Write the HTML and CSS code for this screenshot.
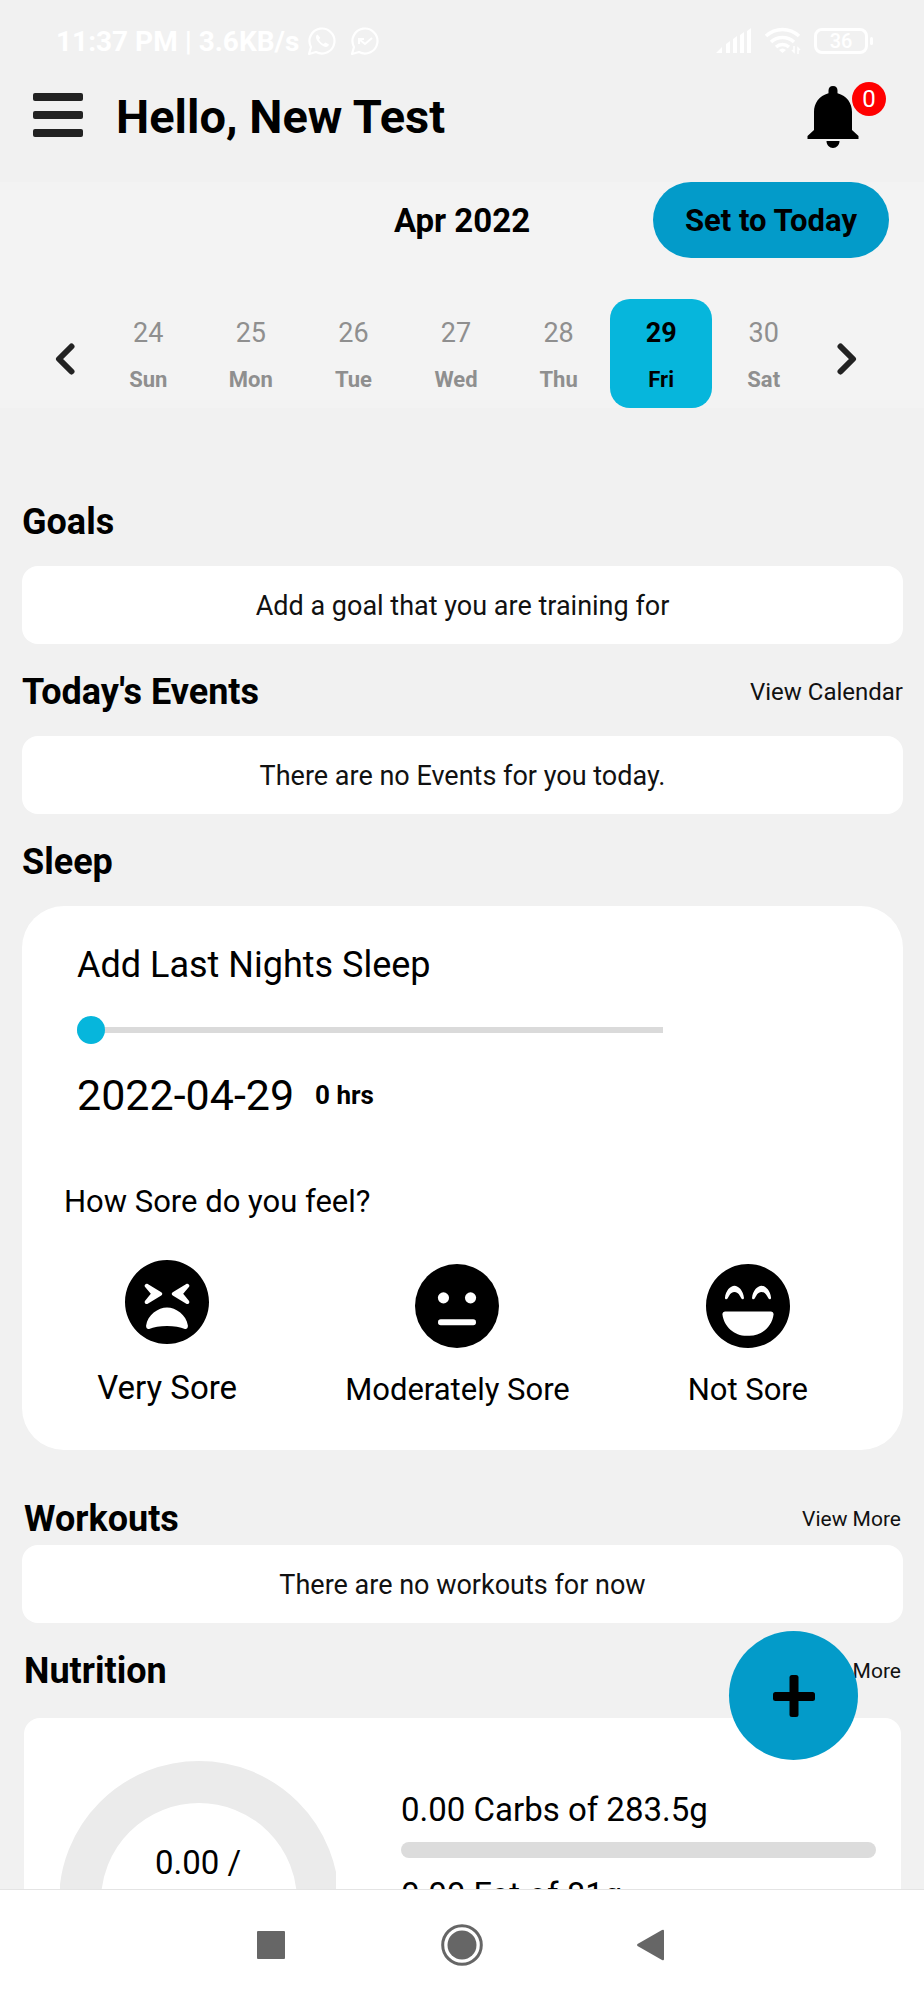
FILE: index.html
```html
<!DOCTYPE html>
<html lang="en">
<head>
<meta charset="utf-8">
<meta name="viewport" content="width=device-width, initial-scale=1">
<title>Training Dashboard</title>
<link rel="stylesheet" href="styles.css">
</head>
<body>
<div class="screen">
  <div class="status-bar">
    <div class="status-left">
      <span>11:37 PM | 3.6KB/s</span>
      <svg class="chat-icon" viewBox="0 0 30 30" aria-hidden="true">
        <path d="M2 28l2-7a12.500 12.500 0 1 1 5 5z" fill="none" stroke="currentColor" stroke-width="2.200" stroke-linejoin="round"/>
        <path d="M10.500 8.500c-2 1-2 4 0 6.500s4 4.500 6.500 5.500 4.500 0 5-2l-3.500-2-2 1.500c-2-1-3.500-2.500-4.500-4.500l1.300-1.700z" fill="currentColor"/>
      </svg>
      <svg class="chat-icon chat-icon-second" viewBox="0 0 30 30" aria-hidden="true">
        <path d="M2 28l2-7a12.500 12.500 0 1 1 5 5z" fill="none" stroke="currentColor" stroke-width="2.200" stroke-linejoin="round"/>
        <path d="M9 18v-5h5M9.500 13.500l5.500 4.500 7-6" fill="none" stroke="currentColor" stroke-width="2"/>
      </svg>
    </div>
    <div class="status-right">
      <svg class="signal-icon" viewBox="0 0 36 26" aria-hidden="true" fill="currentColor">
        <path d="M0 25l6-6v6zM10 16l4-3v12h-4zM17 11l4-3v17h-4zM24 7l4-3v21h-4zM31 3l4-3v25h-4z"/>
      </svg>
      <svg class="wifi-icon" viewBox="0 0 38 30" aria-hidden="true" fill="none" stroke="currentColor" stroke-width="3.500">
        <path d="M2 10a24 24 0 0 1 33 0M7 16a17 17 0 0 1 23 0M12 21a10 10 0 0 1 13 0"/>
        <path d="M15 24q3.500-3 7 0l-3.500 3z" fill="currentColor" stroke="none"/>
        <path d="M30 20v6l-2-2M34 28v-6l2 2" stroke-width="1.500"/>
      </svg>
      <span class="battery">36</span>
    </div>
  </div>

  <header class="header">
    <button class="icon-button" type="button" aria-label="Menu">
      <svg class="menu-icon" viewBox="0 0 50 44" fill="#222"><rect width="50" height="8" rx="2"/><rect y="18" width="50" height="8" rx="2"/><rect y="36" width="50" height="8" rx="2"/></svg>
    </button>
    <h1 class="greeting">Hello, New Test</h1>
    <button class="icon-button bell" type="button" aria-label="Notifications">
      <svg class="bell-icon" viewBox="0 0 52 62"><path d="M26 0c3 0 4.500 2 4.500 4.500v2.700C40 10 45 17 45 26v18l6.500 6v3H.500v-3L7 44V26C7 17 12 10 21.500 7.200V4.500C21.500 2 23 0 26 0zM19.500 55h13c0 4-3 7-6.500 7s-6.500-3-6.500-7z"/></svg>
      <span class="badge">0</span>
    </button>
  </header>

  <section class="calendar" aria-label="Calendar">
    <div class="month-row">
      <h2 class="month">Apr 2022</h2>
      <button class="today-button" type="button">Set to Today</button>
    </div>
    <div class="week">
      <button class="icon-button arrow" type="button" aria-label="Previous week"><svg class="arrow-icon" viewBox="0 0 20 32"><path d="M16.500 3.500L4 16l12.500 12.500"/></svg></button>
      <div class="days">
        <button class="day" type="button"><span class="day-number">24</span><span class="day-name">Sun</span></button>
        <button class="day" type="button"><span class="day-number">25</span><span class="day-name">Mon</span></button>
        <button class="day" type="button"><span class="day-number">26</span><span class="day-name">Tue</span></button>
        <button class="day" type="button"><span class="day-number">27</span><span class="day-name">Wed</span></button>
        <button class="day" type="button"><span class="day-number">28</span><span class="day-name">Thu</span></button>
        <button class="day day-selected" type="button" aria-pressed="true"><span class="day-number">29</span><span class="day-name">Fri</span></button>
        <button class="day" type="button"><span class="day-number">30</span><span class="day-name">Sat</span></button>
      </div>
      <button class="icon-button arrow" type="button" aria-label="Next week"><svg class="arrow-icon" viewBox="0 0 20 32"><path d="M3.500 3.500L16 16 3.500 28.500"/></svg></button>
    </div>
  </section>

  <main class="content">
    <section>
      <div class="section-head"><h2 class="section-title">Goals</h2></div>
      <button class="card message" type="button">Add a goal that you are training for</button>
    </section>

    <section>
      <div class="section-head"><h2 class="section-title">Today's Events</h2><a class="link" href="#calendar">View Calendar</a></div>
      <p class="card message">There are no Events for you today.</p>
    </section>

    <section>
      <div class="section-head"><h2 class="section-title">Sleep</h2></div>
      <div class="card sleep">
        <div class="sleep-log">
          <label class="sleep-title" for="sleep-hours">Add Last Nights Sleep</label>
          <input class="slider" id="sleep-hours" type="range" min="0" max="12" value="0">
          <div class="sleep-value"><span class="sleep-date">2022-04-29</span><output class="sleep-hours" for="sleep-hours">0 hrs</output></div>
        </div>
        <h3 class="question">How Sore do you feel?</h3>
        <div class="moods">
          <button class="mood mood-large" type="button">
            <svg class="face" viewBox="0 8 496 496" aria-hidden="true"><path d="M248 8C111 8 0 119 0 256s111 248 248 248 248-111 248-248S385 8 248 8zm33.800 189.700l80-48c11.600-6.900 24 7.700 15.400 18L343.600 208l33.600 40.300c8.700 10.400-3.900 24.800-15.400 18l-80-48c-7.700-4.700-7.700-15.900 0-20.600zm-163-30c-8.600-10.300 3.800-24.900 15.400-18l80 48c7.800 4.700 7.800 15.900 0 20.600l-80 48c-11.500 6.800-24-7.600-15.400-18l33.600-40.300-33.600-40.300zM248 288c51.900 0 115.300 43.800 123.200 106.700 1.700 13.600-8 24.600-17.700 20.400-25.900-11.100-64.400-17.400-105.500-17.400s-79.600 6.300-105.500 17.400c-9.800 4.200-19.400-7-17.700-20.400C132.700 331.800 196.100 288 248 288z"/></svg>
            <span>Very Sore</span>
          </button>
          <button class="mood" type="button">
            <svg class="face" viewBox="0 8 496 496" aria-hidden="true"><circle cx="248" cy="256" r="248"/><g fill="#fff"><circle cx="168" cy="208" r="33"/><circle cx="328" cy="208" r="33"/><rect x="136" y="334" width="224" height="36" rx="16"/></g></svg>
            <span>Moderately Sore</span>
          </button>
          <button class="mood" type="button">
            <svg class="face" viewBox="0 8 496 496" aria-hidden="true"><path d="M248 8C111 8 0 119 0 256s111 248 248 248 248-111 248-248S385 8 248 8zm24 199.400c3.300-42.100 32.200-71.400 56-71.400s52.700 29.300 56 71.400c.7 8.600-10.800 11.900-14.900 4.500l-9.500-17c-7.700-13.700-19.200-21.600-31.500-21.600s-23.800 7.900-31.500 21.600l-9.500 17c-4.200 7.400-15.800 4.100-15.100-4.500zm-160 0c3.300-42.100 32.200-71.400 56-71.400s52.700 29.300 56 71.400c.7 8.600-10.800 11.900-14.900 4.500l-9.500-17c-7.700-13.700-19.200-21.600-31.500-21.600s-23.800 7.900-31.500 21.600l-9.500 17c-4.300 7.400-15.800 4-15.100-4.500zM398.900 306C390 377 329.400 432 256 432h-16c-73.400 0-134-55-142.900-126-1.200-9.500 6.300-18 15.900-18h270c9.600 0 17.100 8.400 15.900 18z"/></svg>
            <span>Not Sore</span>
          </button>
        </div>
      </div>
    </section>

    <section>
      <div class="section-head section-head-inset section-head-low"><h2 class="section-title">Workouts</h2><a class="link link-small" href="#workouts">View More</a></div>
      <p class="card message">There are no workouts for now</p>
    </section>

    <section>
      <div class="section-head section-head-inset"><h2 class="section-title">Nutrition</h2><a class="link link-small" href="#nutrition">View More</a></div>
      <div class="card nutrition">
        <div class="calories">
          <svg class="ring" viewBox="0 0 276 280" aria-hidden="true"><circle cx="139" cy="140" r="119" fill="none" stroke="#ebebeb" stroke-width="42"/></svg>
          <span class="calories-value">0.00 /</span>
        </div>
        <div class="macros">
          <div class="macro"><span>0.00 Carbs of 283.5g</span><div class="bar"></div></div>
          <div class="macro"><span>0.00 Fat of 81g</span><div class="bar"></div></div>
        </div>
      </div>
    </section>
  </main>

  <nav class="system-nav" aria-label="System">
    <button class="icon-button" type="button" aria-label="Recent apps"><svg class="nav-icon" viewBox="0 0 42 42"><rect x="7" y="7" width="28" height="28" rx="1"/></svg></button>
    <button class="icon-button" type="button" aria-label="Home"><svg class="nav-icon" viewBox="0 0 42 42"><circle cx="21" cy="21" r="19.300" fill="none" stroke="#666" stroke-width="3"/><circle cx="21" cy="21" r="14.500"/></svg></button>
    <button class="icon-button" type="button" aria-label="Back"><svg class="nav-icon" viewBox="0 0 42 42"><path d="M5.500 20Q4.500 21 5.500 22L30 36Q32 37 32 35V7Q32 5 30 6z"/></svg></button>
  </nav>

  <button class="fab" type="button" aria-label="Add"><svg class="plus-icon" viewBox="0 0 42 42"><rect x="0" y="17" width="42" height="9" rx="2.500"/><rect x="16.500" y="0" width="9" height="42" rx="2.500"/></svg></button>
</div>
</body>
</html>
```
FILE: styles.css
```css
* {
  box-sizing: border-box;
}

body {
  margin: 0;
  background: #f1f1f1;
  color: #000;
  font-family: Roboto, "Liberation Sans", sans-serif;
}

h1, h2, h3, p {
  margin: 0;
}

button {
  border: 0;
  padding: 0;
  background: none;
  color: inherit;
  font: inherit;
  cursor: pointer;
}

svg {
  display: block;
  flex: none;
}

.screen {
  position: relative;
  display: flex;
  flex-direction: column;
  height: 100vh;
  overflow: hidden;
}

.icon-button {
  display: flex;
  align-items: center;
  justify-content: center;
}

/* Status bar */
.status-bar {
  flex: none;
  display: flex;
  align-items: center;
  justify-content: space-between;
  height: 82px;
  padding: 0 50px 0 56px;
  color: #fff;
  font-size: 28px;
  font-weight: 700;
}

.status-left,
.status-right {
  display: flex;
  align-items: center;
}

.chat-icon {
  width: 30px;
  height: 30px;
  margin-left: 8px;
}

.chat-icon-second {
  margin-left: 13px;
}

.signal-icon {
  width: 36px;
  height: 26px;
}

.wifi-icon {
  width: 38px;
  height: 30px;
  margin: 0 12px;
}

.battery {
  position: relative;
  width: 54px;
  height: 26px;
  margin-right: 6px;
  border: 3px solid #fff;
  border-radius: 8px;
  font-size: 20px;
  font-weight: 500;
  line-height: 20px;
  text-align: center;
}

.battery::after {
  content: "";
  position: absolute;
  top: 6px;
  right: -8px;
  width: 3px;
  height: 8px;
  border-radius: 2px;
  background: #fff;
}

/* Header */
.header {
  flex: none;
  display: flex;
  align-items: center;
  height: 100px;
  padding: 0 65px 31px 33px;
}

.menu-icon {
  width: 50px;
  height: 44px;
  margin-bottom: 4px;
}

.greeting {
  flex: 1;
  margin-left: 33px;
  font-size: 47px;
  line-height: 56px;
}

.bell {
  position: relative;
}

.bell-icon {
  width: 52px;
  height: 62px;
}

.badge {
  position: absolute;
  top: -4px;
  right: -27px;
  width: 34px;
  height: 34px;
  border-radius: 50%;
  background: #f00;
  color: #fff;
  font-size: 24px;
  line-height: 34px;
  text-align: center;
}

/* Calendar */
.calendar {
  flex: none;
  background: #f3f3f3;
}

.month-row {
  display: grid;
  grid-template-columns: 1fr auto 1fr;
  align-items: center;
  padding: 0 35px;
}

.month {
  grid-column: 2;
  font-size: 33px;
}

.today-button {
  justify-self: end;
  height: 76px;
  padding: 0 32px;
  border-radius: 38px;
  background: #039bc9;
  font-size: 31px;
  font-weight: 700;
}

.week {
  display: flex;
  padding: 41px 45px 0 33px;
}

.arrow {
  width: 64px;
  padding-top: 10px;
}

.arrow-icon {
  width: 20px;
  height: 32px;
  fill: none;
  stroke: #222;
  stroke-width: 6;
  stroke-linecap: round;
  stroke-linejoin: round;
}

.days {
  flex: 1;
  display: grid;
  grid-template-columns: repeat(7, 1fr);
}

.day {
  display: flex;
  flex-direction: column;
  align-items: center;
  gap: 18px;
  padding: 18px 0 15px;
  border-radius: 20px;
  color: #8f8f8f;
}

.day-number {
  font-size: 27px;
  line-height: 32px;
}

.day-name {
  font-size: 22px;
  font-weight: 700;
  line-height: 26px;
}

.day-selected {
  background: #06b6dc;
  color: #000;
}

.day-selected .day-number {
  font-weight: 700;
}

/* Content */
.content {
  flex: 1;
  min-height: 0;
  overflow: hidden;
  padding: 66px 21px 0 22px;
}

.section-head {
  display: flex;
  align-items: center;
  justify-content: space-between;
  height: 92px;
  padding-top: 3px;
}

.section-head-inset {
  height: 95px;
  padding: 0 2px;
}

.section-head-low {
  padding-top: 43px;
}

.section-title {
  font-size: 36px;
  line-height: 44px;
}

.link {
  color: #111;
  font-size: 24px;
  text-decoration: none;
}

.link-small {
  font-size: 21px;
}

.card {
  border-radius: 16px;
  background: #fff;
}

.message {
  display: block;
  width: 100%;
  padding: 24px 16px 22px;
  color: #111;
  font-size: 27px;
  line-height: 32px;
  text-align: center;
}

.sleep {
  padding: 37px 0 42px;
  border-radius: 42px;
}

.sleep-log {
  padding-left: 55px;
}

.sleep-title {
  display: block;
  font-size: 36px;
  line-height: 44px;
}

.slider {
  display: block;
  width: 71%;
  height: 28px;
  margin: 29px 0 26px;
  appearance: none;
  background: linear-gradient(#dadada, #dadada) center / 100% 6px no-repeat;
}

.slider::-webkit-slider-thumb {
  appearance: none;
  width: 28px;
  height: 28px;
  border-radius: 50%;
  background: #06b6dc;
}

.sleep-value {
  display: flex;
  align-items: center;
  gap: 21px;
}

.sleep-date {
  font-size: 43px;
  line-height: 50px;
}

.sleep-hours {
  font-size: 26px;
  font-weight: 700;
}

.question {
  margin: 64px 0 40px 42px;
  font-size: 31px;
  font-weight: 400;
  line-height: 36px;
}

.moods {
  display: grid;
  grid-template-columns: repeat(3, 1fr);
  align-items: end;
  padding-right: 10px;
}

.mood {
  display: flex;
  flex-direction: column;
  align-items: center;
  gap: 24px;
  font-size: 31px;
  line-height: 36px;
}

.mood-large {
  font-size: 33px;
  line-height: 40px;
}

.face {
  width: 84px;
  height: 84px;
}

.nutrition {
  display: flex;
  gap: 65px;
  margin: 0 2px;
  padding: 43px 25px 43px 36px;
}

.calories {
  flex: none;
  display: grid;
  place-items: center;
}

.ring,
.calories-value {
  grid-area: 1 / 1;
}

.ring {
  width: 276px;
  height: 280px;
}

.calories-value {
  padding-bottom: 76px;
  font-size: 33px;
  line-height: 40px;
}

.macros {
  flex: 1;
  display: flex;
  flex-direction: column;
  gap: 17px;
  padding-top: 29px;
}

.macro {
  font-size: 33px;
  line-height: 40px;
}

.bar {
  height: 16px;
  margin-top: 12px;
  border-radius: 8px;
  background: #dcdcdc;
}

/* System navigation */
.system-nav {
  flex: none;
  display: flex;
  justify-content: center;
  gap: 149px;
  height: 111px;
  border-top: 1px solid #e4e4e4;
  background: #fff;
}

.nav-icon {
  width: 42px;
  height: 42px;
  fill: #666;
}

.fab {
  position: absolute;
  right: 66px;
  bottom: 240px;
  display: flex;
  align-items: center;
  justify-content: center;
  width: 129px;
  height: 129px;
  border-radius: 50%;
  background: #039bc9;
}

.plus-icon {
  width: 42px;
  height: 42px;
}
```
